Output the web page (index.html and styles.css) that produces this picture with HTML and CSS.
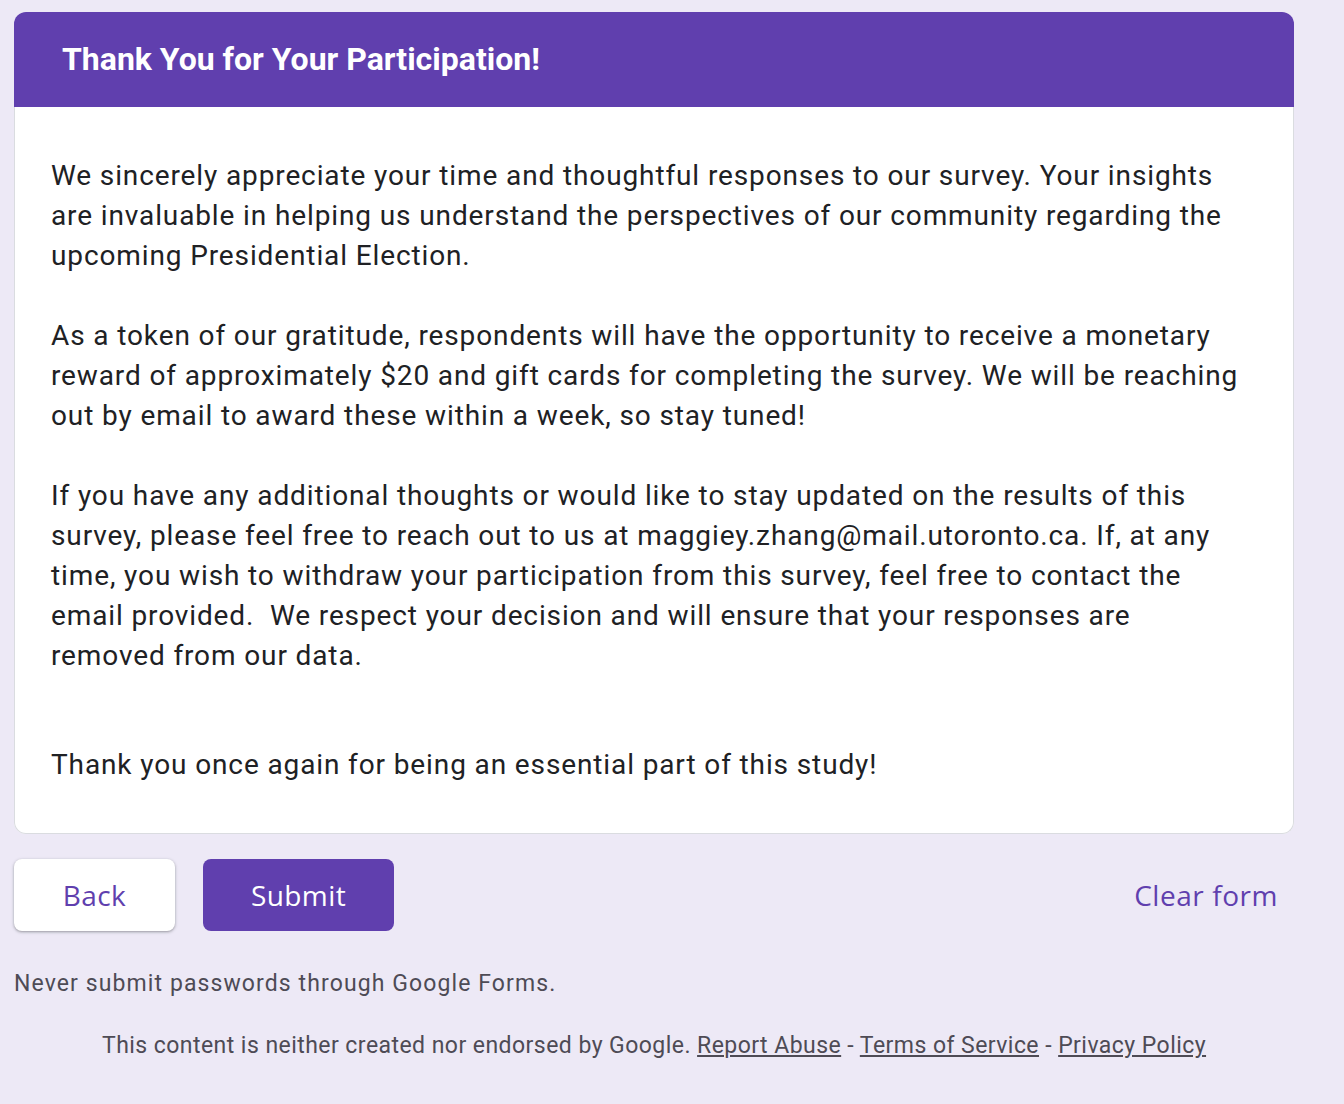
FILE: index.html
```html
<!DOCTYPE html>
<html lang="en">
<head>
<meta charset="utf-8">
<title>Thank You for Your Participation!</title>
<link rel="stylesheet" href="styles.css">
</head>
<body>
<div class="page">
  <div class="card">
    <div class="card-header">
      <h1 class="card-title">Thank You for Your Participation!</h1>
    </div>
    <div class="card-body">
      <p class="para">We sincerely appreciate your time and thoughtful responses to our survey. Your insights are invaluable in helping us understand the perspectives of our community regarding the upcoming Presidential Election.</p>
      <p class="para">As a token of our gratitude, respondents will have the opportunity to receive a monetary reward of approximately $20 and gift cards for completing the survey. We will be reaching out by email to award these within a week, so stay tuned!</p>
      <p class="para para-third">If you have any additional thoughts or would like to stay updated on the results of this survey, please feel free to reach out to us at maggiey.zhang@mail.utoronto.ca. If, at any time, you wish to withdraw your participation from this survey, feel free to contact the email provided.&nbsp; We respect your decision and will ensure that your responses are removed from our data.</p>
      <p class="para para-last">Thank you once again for being an essential part of this study!</p>
    </div>
  </div>
  <div class="actions">
    <div class="actions-left">
      <button class="btn btn-back" type="button">Back</button>
      <button class="btn btn-submit" type="button">Submit</button>
    </div>
    <button class="btn-clear" type="button">Clear form</button>
  </div>
  <div class="warning">Never submit passwords through Google Forms.</div>
  <div class="footer">This content is neither created nor endorsed by Google. <a href="#">Report Abuse</a> - <a href="#">Terms of Service</a> - <a href="#">Privacy Policy</a></div>
</div>
</body>
</html>
```
FILE: styles.css
```css
* { box-sizing: border-box; }
html, body { margin: 0; padding: 0; }
body {
  background: #ede9f6;
  font-family: Roboto, "Liberation Sans", Arial, sans-serif;
  color: #202124;
}
.page {
  width: 1280px;
  margin: 12px 0 0 14px;
}
.card {
  background: #fff;
  border-radius: 12px;
}
.card-header {
  background: #603fae;
  border-radius: 12px 12px 0 0;
  height: 95px;
  display: flex;
  align-items: center;
  padding: 0 48px;
}
.card-title {
  margin: 0;
  color: #fff;
  font-size: 32px;
  font-weight: 700;
  letter-spacing: 0;
  padding-bottom: 2px;
}
.card-body {
  border: 1px solid #dadce0;
  border-top: none;
  border-radius: 0 0 12px 12px;
  padding: 49px 47px 48px 36px;
}
.para {
  margin: 0 0 40px 0;
  font-size: 28px;
  line-height: 40px;
  letter-spacing: 0.88px;
  color: #202124;
}
.para-third { margin-bottom: 0; }
.para-last { margin: 69px 0 0 0; }
.actions {
  display: flex;
  align-items: center;
  justify-content: space-between;
  margin-top: 25px;
}
.actions-left {
  display: flex;
  gap: 28px;
}
.btn {
  height: 72px;
  border: none;
  border-radius: 8px;
  font-family: "Open Sans", Roboto, sans-serif;
  font-size: 28px;
  font-weight: 500;
  letter-spacing: 0.4px;
  cursor: pointer;
}
.btn-back {
  width: 161px;
  background: #fff;
  color: #603fae;
  box-shadow: 0 1px 2px rgba(60,64,67,.3), 0 1px 3px 1px rgba(60,64,67,.15);
}
.btn-submit {
  width: 191px;
  background: #603fae;
  color: #fff;
}
.btn-clear {
  background: none;
  border: none;
  color: #603fae;
  font-family: "Open Sans", Roboto, sans-serif;
  font-size: 28px;
  font-weight: 500;
  letter-spacing: 0.55px;
  padding: 0 16px 0 0;
  cursor: pointer;
}
.warning {
  margin-top: 39px;
  font-size: 23px;
  letter-spacing: 1.1px;
  color: #4e4b55;
  line-height: 28px;
}
.footer {
  margin-top: 34px;
  text-align: center;
  font-size: 23px;
  letter-spacing: 0.45px;
  color: #4e4b55;
  line-height: 28px;
}
.footer a {
  color: #4e4b55;
  text-decoration: underline;
}
```
